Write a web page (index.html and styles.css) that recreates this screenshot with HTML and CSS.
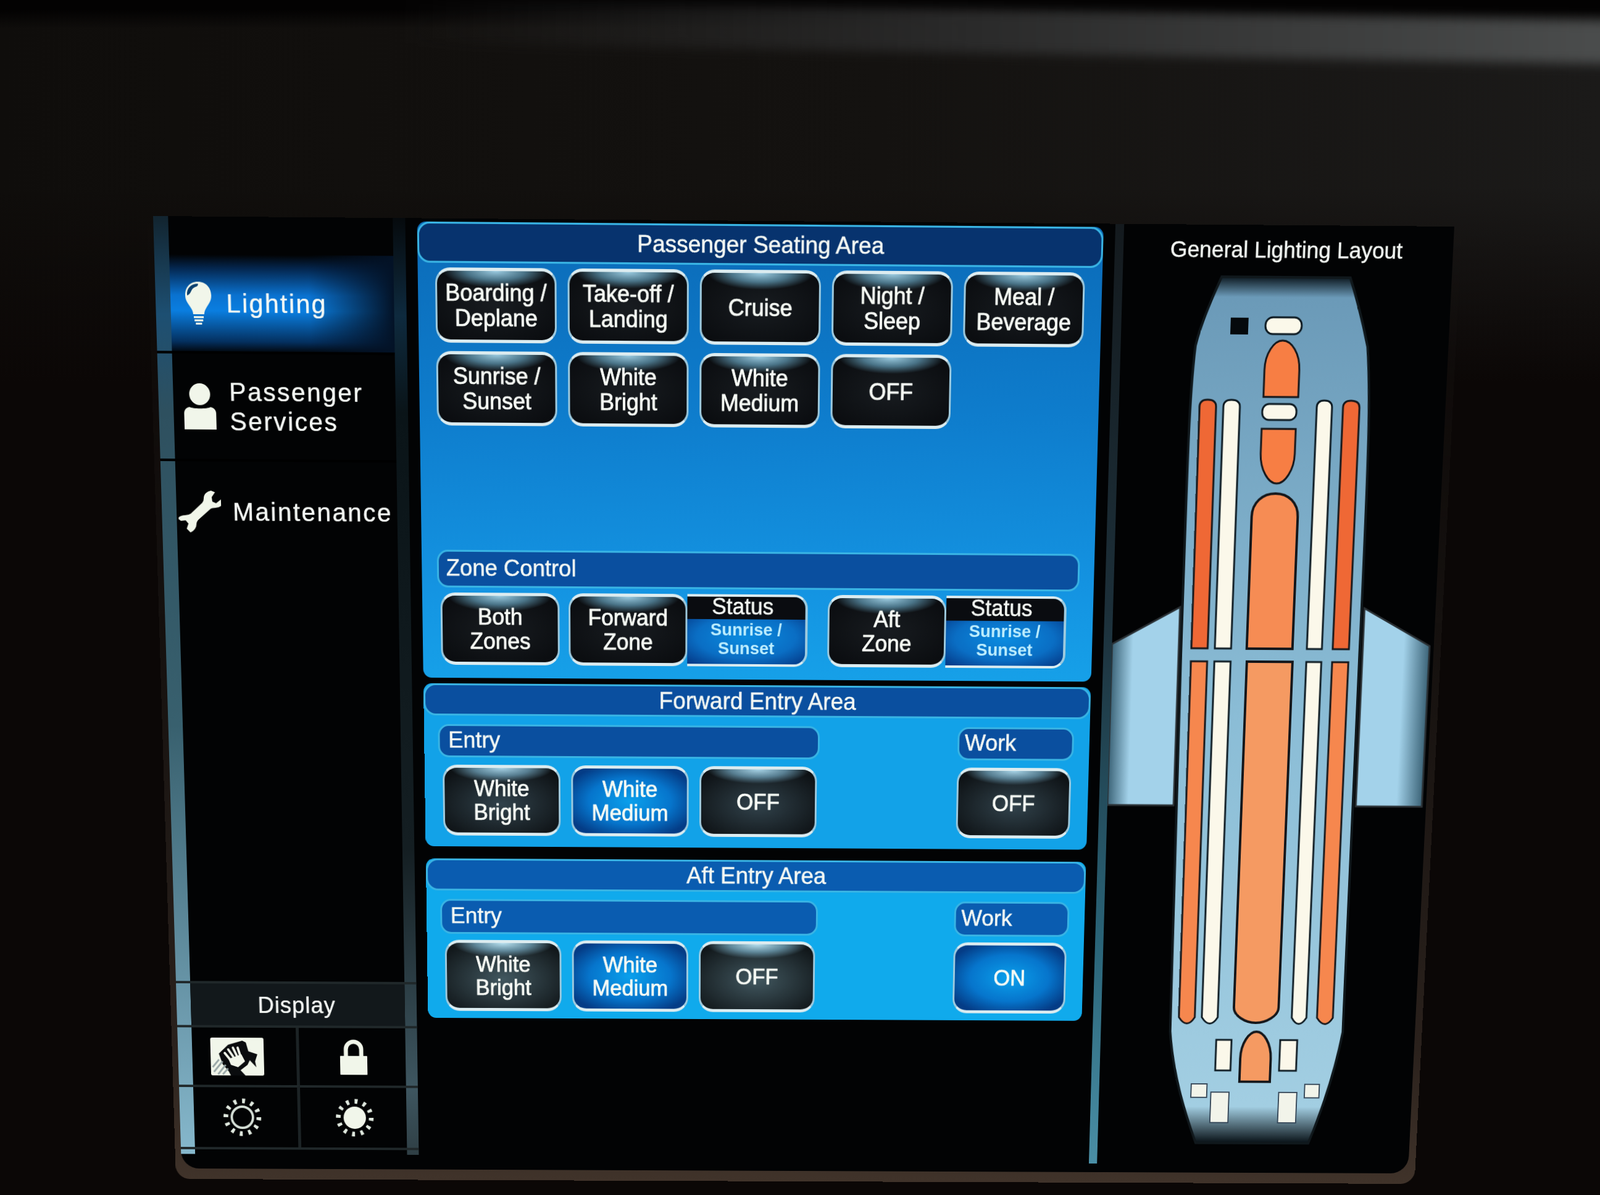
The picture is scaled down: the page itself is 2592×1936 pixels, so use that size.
FILE: index.html
```html
<!DOCTYPE html>
<html lang="en">
<head>
    <meta charset="UTF-8">
    <title>Cabin Lighting Panel</title>
    <link rel="stylesheet" href="styles.css">
</head>
<body>

<div class="glare"></div>

<div class="bezel">
<div class="screen">

    <aside class="sidebar">
        <nav class="nav">
            <div class="nav-item nav-lighting active">
                <svg class="nav-icon" width="50" height="70" viewBox="0 0 50 70">
                    <path class="icon-fill" d="M25 2C11 2 4 12 4 23c0 9 5 13 9 20 2 3 3 6 3 9h18c0-3 1-6 3-9 4-7 9-11 9-20C46 12 39 2 25 2z"/>
                    <path class="icon-cut" d="M7 23C6 12 14 5 25 5c1 5-5 4-9 8-3 4-4 9-9 10z"/>
                    <path class="icon-fill" d="M17 55h16v3H17zM18 60h14v3H18zM20 65h10v3H20z"/>
                </svg>
                <span>Lighting</span>
            </div>
            <div class="nav-item nav-passenger">
                <svg class="nav-icon" width="52" height="72" viewBox="0 0 52 72">
                    <circle class="icon-fill" cx="26" cy="17" r="17"/>
                    <path class="icon-fill" d="M9 37c5 3 29 3 34 0 6 1 9 5 9 10v25H0V47c0-5 3-9 9-10z"/>
                </svg>
                <span>Passenger<br>Services</span>
            </div>
            <div class="nav-item nav-maintenance">
                <svg class="nav-icon" width="70" height="66" viewBox="0 0 70 66">
                    <path class="icon-fill icon-thick" d="M54 1c-6 1-11 5-11 11 0 3 0 5-3 8L21 37c-3 2-6 3-10 3-5 0-9 2-11 4l4 3 8-1 5 6-3 8 5 5c5-2 9-7 9-12 0-4 2-6 4-8l20-17c3-2 6-2 9-2 6 0 11-4 12-9l-3-2-8 6-7-3-1-8 5-7z"/>
                </svg>
                <span>Maintenance</span>
            </div>
        </nav>

        <div class="display">
            <div class="display-title">Display</div>
            <div class="display-grid">
                <div class="display-cell cell-clean">
                    <svg width="90" height="64" viewBox="0 0 90 64">
                        <rect class="icon-fill" width="90" height="64" rx="3"/>
                        <path class="cloth" d="M14 27 30 12 54 5l6 3 4 15 15 5-4 12 2 10-11-12-4 8-12 9 11 12-27-2-4-8-10-12z"/>
                        <path class="icon-fill" d="M30 36 52 28l6 12-12 10-12-4z"/>
                        <path class="hand-line" d="M32 36 24 26M38 32 30 20M44 30 38 17M50 30 46 17"/>
                        <path class="hatch-line" d="M3 50 14 37M5 58 20 40M12 62 25 46M20 62 29 52"/>
                    </svg>
                </div>
                <div class="display-cell">
                    <svg width="46" height="60" viewBox="0 0 46 60">
                        <path class="lock-shackle" d="M10 30V17a13 13 0 0 1 26 0v13"/>
                        <rect class="icon-fill" y="28" width="46" height="32" rx="1"/>
                    </svg>
                </div>
                <div class="display-cell cell-dim">
                    <svg width="64" height="64" viewBox="0 0 64 64">
                        <circle class="sun-rays" cx="32" cy="32" r="28"/>
                        <circle class="sun-ring" cx="32" cy="32" r="18"/>
                    </svg>
                </div>
                <div class="display-cell">
                    <svg width="64" height="64" viewBox="0 0 64 64">
                        <circle class="sun-rays" cx="32" cy="32" r="28"/>
                        <circle class="icon-fill" cx="32" cy="32" r="19"/>
                    </svg>
                </div>
            </div>
        </div>
    </aside>

    <main class="center">

        <section class="panel panel-seating">
            <h2 class="panel-head">Passenger Seating Area</h2>
            <div class="scene-grid">
                <button class="btn">Boarding /<br>Deplane</button>
                <button class="btn">Take-off /<br>Landing</button>
                <button class="btn">Cruise</button>
                <button class="btn">Night /<br>Sleep</button>
                <button class="btn">Meal /<br>Beverage</button>
                <button class="btn">Sunrise /<br>Sunset</button>
                <button class="btn">White<br>Bright</button>
                <button class="btn">White<br>Medium</button>
                <button class="btn">OFF</button>
            </div>
            <div class="zone">
                <h3 class="sub-head zone-head">Zone Control</h3>
                <div class="zone-row">
                    <button class="btn zone-both">Both<br>Zones</button>
                    <div class="zone-group zone-forward">
                        <button class="btn">Forward<br>Zone</button>
                        <div class="status">
                            <div class="status-title">Status</div>
                            <div class="status-value">Sunrise /<br>Sunset</div>
                        </div>
                    </div>
                    <div class="zone-group zone-aft">
                        <button class="btn">Aft<br>Zone</button>
                        <div class="status">
                            <div class="status-title">Status</div>
                            <div class="status-value">Sunrise /<br>Sunset</div>
                        </div>
                    </div>
                </div>
            </div>
        </section>

        <section class="panel panel-forward">
            <h2 class="panel-head">Forward Entry Area</h2>
            <div class="entry-row">
                <div class="entry-col">
                    <h3 class="sub-head">Entry</h3>
                    <div class="btn-row">
                        <button class="btn">White<br>Bright</button>
                        <button class="btn btn-on">White<br>Medium</button>
                        <button class="btn">OFF</button>
                    </div>
                </div>
                <div class="work-col">
                    <h3 class="sub-head">Work</h3>
                    <button class="btn">OFF</button>
                </div>
            </div>
        </section>

        <section class="panel panel-aft">
            <h2 class="panel-head">Aft Entry Area</h2>
            <div class="entry-row">
                <div class="entry-col">
                    <h3 class="sub-head">Entry</h3>
                    <div class="btn-row">
                        <button class="btn">White<br>Bright</button>
                        <button class="btn btn-on">White<br>Medium</button>
                        <button class="btn">OFF</button>
                    </div>
                </div>
                <div class="work-col">
                    <h3 class="sub-head">Work</h3>
                    <button class="btn btn-on">ON</button>
                </div>
            </div>
        </section>

    </main>

    <section class="layout">
        <h2 class="layout-title">General Lighting Layout</h2>
        <svg class="plane" width="535" height="1470" viewBox="1565 70 535 1470">
            <defs>
                <linearGradient id="bodyFill" gradientUnits="userSpaceOnUse" x1="0" y1="80" x2="0" y2="1490">
                    <stop offset="0" stop-color="#0e1a22"/>
                    <stop offset="0.022" stop-color="#6b9ab8"/>
                    <stop offset="0.5" stop-color="#8bbdd6"/>
                    <stop offset="0.955" stop-color="#a2cee2"/>
                    <stop offset="1" stop-color="#050d12"/>
                </linearGradient>
                <linearGradient id="wingLeft" gradientUnits="userSpaceOnUse" x1="1565" y1="0" x2="1600" y2="0">
                    <stop offset="0" stop-color="#3c6478"/>
                    <stop offset="1" stop-color="#a3d2ea"/>
                </linearGradient>
                <linearGradient id="wingRight" gradientUnits="userSpaceOnUse" x1="2093" y1="0" x2="2050" y2="0">
                    <stop offset="0" stop-color="#3c6478"/>
                    <stop offset="1" stop-color="#a3d2ea"/>
                </linearGradient>
            </defs>

            <!-- wings -->
            <path fill="url(#wingLeft)" class="wing-edge" d="M1565 660 1676 600V922H1565z"/>
            <path fill="url(#wingRight)" class="wing-edge" d="M2093 660 1982 600V922H2093z"/>

            <!-- fuselage -->
            <path fill="url(#bodyFill)" class="body-edge" d="M1726 80H1935C1950 120 1960 155 1968 187 1976 260 1978 330 1977 675V1299C1966 1370 1948 1430 1926 1489H1733C1710 1430 1690 1370 1683 1299L1680 675C1680 330 1680 260 1687 187 1694 155 1708 120 1726 80z"/>

            <!-- forward galley -->
            <rect class="lamp-off" x="1743" y="143" width="29" height="26"/>
            <rect class="lamp-white" x="1800" y="142" width="59" height="26" rx="12"/>
            <path class="lamp-nose" d="M1801 266V224C1801 198 1815 178 1829 178 1844 178 1858 198 1858 224V266z"/>
            <rect class="lamp-white" x="1800" y="277" width="56" height="25" rx="11"/>
            <path class="lamp-nose" d="M1800 316H1856V355C1856 380 1842 402 1828 402 1814 402 1800 380 1800 355z"/>

            <!-- cabin, front section -->
            <path class="lamp-side" d="M1697 666V282Q1697 271 1710 271 1724 271 1724 282V666z"/>
            <path class="lamp-white" d="M1736 666V282Q1736 271 1749 271 1763 271 1763 282V666z"/>
            <path class="lamp-front" d="M1789 666V455C1789 432 1806 418 1827 418 1848 418 1865 432 1865 455V666z"/>
            <path class="lamp-white" d="M1889 666V282Q1889 271 1901 271 1914 271 1914 282V666z"/>
            <path class="lamp-side" d="M1932 666V282Q1932 271 1945 271 1959 271 1959 282V666z"/>

            <!-- cabin, rear section -->
            <path class="lamp-rear" d="M1697 687H1724V1275Q1711 1296 1697 1275z"/>
            <path class="lamp-white" d="M1736 687H1763V1275Q1750 1296 1736 1275z"/>
            <path class="lamp-center" d="M1790 687H1866V1258C1866 1272 1846 1284 1828 1284 1810 1284 1790 1272 1790 1258z"/>
            <path class="lamp-white" d="M1889 687H1914V1275Q1901 1296 1889 1275z"/>
            <path class="lamp-rear" d="M1932 687H1959V1275Q1946 1296 1932 1275z"/>

            <!-- aft galley -->
            <path class="lamp-center" d="M1804 1384V1345C1804 1318 1818 1299 1830 1299 1842 1299 1856 1318 1856 1345V1384z"/>
            <rect class="lamp-white" x="1762" y="1313" width="26" height="52"/>
            <rect class="lamp-white" x="1871" y="1313" width="29" height="52"/>
            <rect class="lamp-small" x="1722" y="1388" width="27" height="23"/>
            <rect class="lamp-small" x="1916" y="1388" width="25" height="23"/>
            <rect class="lamp-small" x="1756" y="1402" width="31" height="52"/>
            <rect class="lamp-small" x="1872" y="1402" width="31" height="52"/>
        </svg>
    </section>

</div>
</div>

</body>
</html>
```
FILE: styles.css
```css
html, body {
    margin: 0;
    width: 2592px;
    height: 1936px;
    overflow: hidden;
}
body {
    font-family: "Liberation Sans", Arial, sans-serif;
    color: #f4f8f4;
    background:
        linear-gradient(to bottom, #030202 16px, rgba(3, 2, 2, 0) 46px),
        linear-gradient(to bottom, rgba(10, 6, 5, 0) 300px, #0b0706 620px),
        linear-gradient(to right, #0f0d0b, #141210 55%, #1b1a19);
    position: relative;
}

/* the lit edge of the bezel, top of the photo */
.glare {
    position: absolute;
    left: -20px;
    top: 11px;
    width: 2660px;
    height: 70px;
    transform: rotate(1deg);
    background: linear-gradient(to right, transparent 25%, #2a2a2a 60%, #4c4e4e 100%);
    filter: blur(9px);
}

/* the photo looks at the panel from above, so the flat layout below is tilted onto the quad */
.bezel {
    position: absolute;
    left: 0;
    top: 0;
    width: 2122px;
    height: 1558px;
    border-radius: 0 0 24px 24px;
    background: linear-gradient(to bottom, transparent 0, #14100e 40%, #2a211c 85%, #40332a 100%);
    transform-origin: 0 0;
    transform: matrix3d(1.01003, 0.009067, 0, 0.000002642, 0.041532, 1.07706, 0, 0.00003968, 0, 0, 1, 0, 248, 350, 0, 1) translateX(-10px);
}
.screen {
    width: 2100px;
    height: 1540px;
    margin-left: 10px;
    display: flex;
    background: #020304;
    border-radius: 0 0 30px 30px;
}

h2, h3 {
    margin: 0;
    font-weight: normal;
}

/* ---- sidebar ---- */
.sidebar {
    width: 405px;
    flex: none;
    display: flex;
    flex-direction: column;
    justify-content: space-between;
    background:
        linear-gradient(to bottom, #12242f 0, #1d4f72 150px, #2e505f 300px, #38606e 800px, #6f9db0 1300px, #86b8cc 1515px) 0 0 / 24px 1515px no-repeat,
        linear-gradient(to bottom, #060a0d 0, #0e2a3e 150px, #0a1418 300px, #141e22 1000px, #3e5660 1400px, #2f3f45 1515px) 100% 0 / 20px 1515px no-repeat;
}
.nav {
    padding-top: 58px;
}
.nav-item {
    display: flex;
    align-items: center;
    margin-right: 20px;
    font-size: 41px;
    letter-spacing: 2.4px;
    line-height: 46px;
    text-shadow: 0 0 1px #fff;
}
.nav-lighting {
    height: 149px;
    gap: 20px;
    margin-left: 24px;
    padding-left: 20px;
    background:
        linear-gradient(to right, rgba(2, 3, 4, 0) 62%, #031226 100%),
        linear-gradient(to bottom, #020304 0, #04264e 14%, #0a72d0 42%, #0a7ee0 58%, #04305f 90%, #020a14 100%);
}
.nav-passenger {
    height: 168px;
    gap: 22px;
    border-top: 4px solid #000;
    box-sizing: border-box;
    padding-left: 41px;
}
.nav-maintenance {
    height: 162px;
    gap: 19px;
    border-top: 4px solid #000;
    box-sizing: border-box;
    padding-left: 27px;
}
.nav-icon {
    flex: none;
}

.icon-fill { fill: #f1f6ea; }
.icon-thick { stroke: #f1f6ea; stroke-width: 2; }
.icon-cut { fill: #0a3f6e; }
.cloth { fill: #0a0c0e; }
.hand-line { fill: none; stroke: #f1f6ea; stroke-width: 4; stroke-linecap: round; }
.hatch-line { fill: none; stroke: #9aa8a8; stroke-width: 3; }
.lock-shackle { fill: none; stroke: #f1f6ea; stroke-width: 7; }
.sun-rays { fill: none; stroke: #dfe8de; stroke-width: 8; stroke-dasharray: 5 9.66; }
.sun-ring { fill: none; stroke: #d5dfd6; stroke-width: 4; }

.display {
    height: 318px;
    display: flex;
    flex-direction: column;
}
.display-title {
    height: 74px;
    line-height: 72px;
    box-sizing: border-box;
    border-top: 4px solid #20282a;
    background: linear-gradient(to right, transparent 24px, #12181b 24px, #12181b 385px, transparent 385px);
    text-align: center;
    font-size: 38px;
    letter-spacing: 1px;
    text-shadow: 0 0 1px #fff;
}
.display-grid {
    display: grid;
    grid-template-columns: 205px 1fr;
    grid-template-rows: 97px 106px;
    margin-bottom: 41px;
    border-top: 4px solid #20282a;
    border-bottom: 4px solid #20282a;
    flex: none;
}
.display-cell {
    display: flex;
    align-items: center;
    justify-content: center;
    padding-right: 16px;
}
.display-cell:nth-child(odd) {
    border-right: 5px solid #1c2325;
    padding-right: 0;
}
.cell-dim {
    padding-left: 12px;
}
.display-cell:nth-child(n+3) {
    border-top: 4px solid #20282a;
}

/* ---- center column ---- */
.center {
    width: 1108px;
    flex: none;
    margin-left: 19px;
    padding-top: 5px;
    display: flex;
    flex-direction: column;
    gap: 20px;
}
.panel {
    border-radius: 14px;
    display: flex;
    flex-direction: column;
    box-sizing: border-box;
}
.panel-seating {
    height: 716px;
    background: linear-gradient(to bottom, #0b6bb8 0, #0e7ccc 40%, #1494e2 80%, #16a0e8 100%);
}
.panel-forward {
    height: 266px;
    margin-top: -11px;
    background: #12a2e8;
}
.panel-aft {
    height: 266px;
    background: #10aaec;
}
.panel-head {
    height: 63px;
    line-height: 57px;
    box-sizing: border-box;
    border: 3px solid #39b4e4;
    border-radius: 20px;
    background: #07336e;
    text-align: center;
    font-size: 37px;
    -webkit-text-stroke: 0.5px #f4f8f4;
    flex: none;
}
.panel-forward .panel-head {
    height: 52px;
    line-height: 46px;
    background: #0a4f9f;
    font-size: 38px;
}
.panel-aft .panel-head {
    height: 53px;
    line-height: 47px;
    background: #0a5cb0;
    font-size: 38px;
}
.sub-head {
    height: 56px;
    line-height: 48px;
    box-sizing: border-box;
    border: 3px solid #39b4e4;
    border-radius: 18px;
    background: #0a4f9f;
    padding-left: 14px;
    font-size: 37px;
    -webkit-text-stroke: 0.5px #f4f8f4;
}
.panel-aft .sub-head {
    background: #0a5cb0;
}

/* ---- buttons ---- */
.btn {
    display: block;
    width: 196px;
    height: 116px;
    padding: 0;
    box-sizing: border-box;
    border-style: solid;
    border-width: 5px 3px;
    border-color: #dcecf0 #9ecade;
    border-radius: 24px;
    color: #f6faf4;
    font-family: "Liberation Sans", Arial, sans-serif;
    font-size: 36px;
    line-height: 39px;
    -webkit-text-stroke: 0.6px #f6faf4;
    text-shadow: 0 0 1px #fff;
    background:
        radial-gradient(ellipse 45% 24% at 50% 0, #9bcbe0 0, #4a7488 55%, transparent 100%),
        radial-gradient(ellipse 70% 70% at 50% 50%, #181c20 0, #090b0e 100%);
}
.btn-on {
    background: radial-gradient(ellipse 60% 60% at 50% 50%, #0aa0ec 0, #0675cc 60%, #043c86 100%);
}
.panel-forward .btn:not(.btn-on) {
    background:
        radial-gradient(ellipse 45% 22% at 50% 0, #a7d3e6 0, #587f92 55%, transparent 100%),
        radial-gradient(ellipse 65% 65% at 50% 55%, #31424b 0, #0d1114 100%);
}
.panel-aft .btn:not(.btn-on) {
    background:
        radial-gradient(ellipse 45% 22% at 50% 0, #b7e0ef 0, #5f8799 55%, transparent 100%),
        radial-gradient(ellipse 65% 65% at 50% 55%, #41575f 0, #11171a 100%);
}
.panel-aft .btn {
    height: 119px;
}

.scene-grid {
    display: grid;
    grid-template-columns: repeat(5, 196px);
    column-gap: 18px;
    row-gap: 13px;
    margin: 7px 0 0 28px;
}

.zone {
    margin-top: auto;
    padding: 0 24px 21px 25px;
}
.zone-head {
    height: 60px;
    line-height: 52px;
    padding-left: 12px;
}
.zone-row {
    display: flex;
    margin-top: 8px;
    padding-left: 5px;
}
.zone-both {
    margin-right: 15px;
}
.zone-group {
    display: flex;
    width: 395px;
}
.zone-aft {
    margin-left: 33px;
}
.status {
    flex: 1;
    box-sizing: border-box;
    height: 116px;
    border-style: solid;
    border-width: 4px 4px 4px 0;
    border-color: #dcecf0 #9ecade;
    border-radius: 0 22px 22px 0;
    overflow: hidden;
    text-align: center;
    display: flex;
    flex-direction: column;
}
.status-title {
    height: 36px;
    line-height: 32px;
    padding-right: 12px;
    background: #0a0c10;
    font-size: 36px;
    -webkit-text-stroke: 0.5px #f6faf4;
}
.status-value {
    flex: 1;
    padding-top: 2px;
    color: #bdeeff;
    font-size: 28px;
    font-weight: bold;
    line-height: 30px;
    background: radial-gradient(ellipse 70% 80% at 50% 40%, #0a8ce0 0, #0a6ec4 60%, #043a88 100%);
}

.entry-row {
    display: flex;
    justify-content: space-between;
    padding: 14px 26px 0 23px;
}
.entry-col {
    width: 635px;
}
.work-col {
    width: 194px;
}
.panel-forward .sub-head {
    height: 54px;
    line-height: 46px;
}
.panel-aft .sub-head {
    height: 58px;
    line-height: 50px;
}
.work-col .sub-head {
    padding-left: 9px;
}
.work-col .btn {
    width: 191px;
    margin: 12px 0 0 0;
}
.btn-row {
    display: flex;
    gap: 18px;
    margin-top: 12px;
    padding-left: 7px;
}
.panel-aft .btn-row,
.panel-aft .work-col .btn {
    margin-top: 10px;
}

/* ---- lighting layout ---- */
.layout {
    flex: 1;
    margin-left: 19px;
    padding-left: 14px;
    background: linear-gradient(to bottom, #141a1e 0, #1c2f39 600px, #2a6478 1150px, #4a8fa6 1525px) 0 0 / 14px 1525px no-repeat;
    display: flex;
    flex-direction: column;
}
.layout-title {
    height: 70px;
    line-height: 76px;
    padding-right: 6px;
    text-align: center;
    font-size: 35.5px;
    -webkit-text-stroke: 0.4px #f4f8f4;
}
.plane {
    display: block;
}
.wing-edge { stroke: #2a3034; stroke-width: 3; }
.body-edge { stroke: #10181c; stroke-width: 4; }
.lamp-off { fill: #05090c; }
.lamp-white { fill: #fbf8ea; stroke: #0d1a22; stroke-width: 3; }
.lamp-small { fill: #f2f4ea; stroke: #37495a; stroke-width: 2; }
.lamp-nose { fill: #f77e44; stroke: #14161a; stroke-width: 3; }
.lamp-side { fill: #ef6835; stroke: #14161a; stroke-width: 3; }
.lamp-rear { fill: #f6874e; stroke: #14161a; stroke-width: 3; }
.lamp-front { fill: #f68c54; stroke: #14161a; stroke-width: 4; }
.lamp-center { fill: #f59a62; stroke: #14161a; stroke-width: 4; }
```
